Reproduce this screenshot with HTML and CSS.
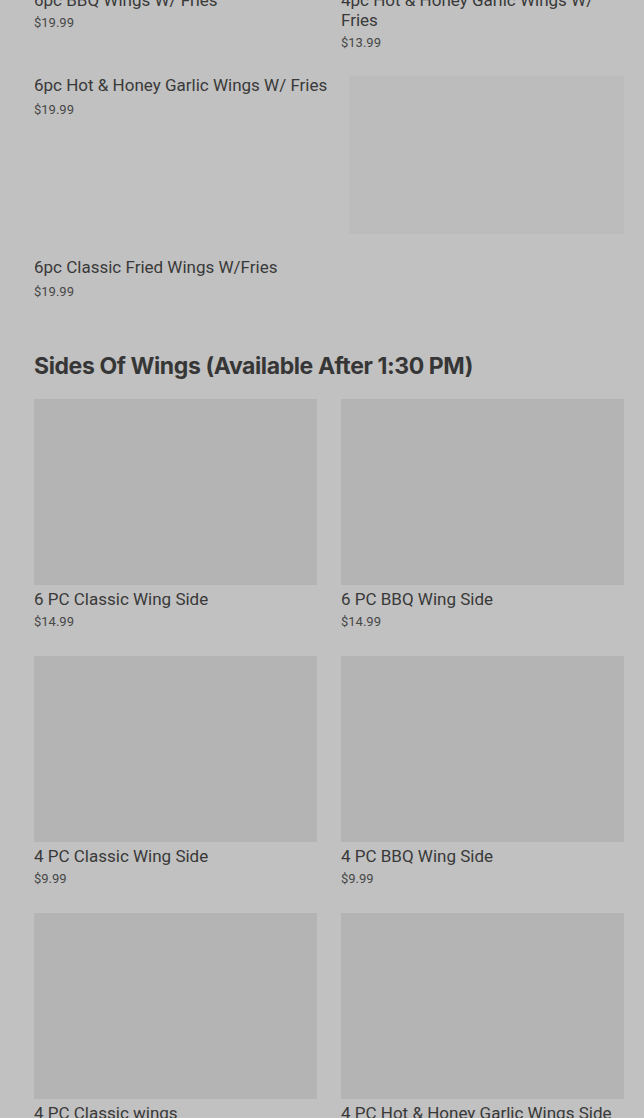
FILE: index.html
```html
<!DOCTYPE html>
<html lang="en">
<head>
  <meta charset="UTF-8" />
  <title>Menu</title>
  <meta name="viewport" content="width=device-width, initial-scale=1.0" />
  <link rel="stylesheet" href="styles.css">
</head>
<body>

  <main class="menu">

    <section class="menu-section">
      <div class="item-grid">
        <div class="item">
          <div class="item-title">6pc BBQ Wings W/ Fries</div>
          <div class="item-price">$19.99</div>
        </div>
        <div class="item">
          <div class="item-title">4pc Hot &amp; Honey Garlic Wings W/ Fries</div>
          <div class="item-price">$13.99</div>
        </div>
      </div>

      <div class="item-row">
        <div class="item-info">
          <div class="item-title">6pc Hot &amp; Honey Garlic Wings W/ Fries</div>
          <div class="item-price">$19.99</div>
        </div>
        <div class="item-thumb"></div>
      </div>

      <div class="item-row">
        <div class="item-info">
          <div class="item-title">6pc Classic Fried Wings W/Fries</div>
          <div class="item-price">$19.99</div>
        </div>
      </div>
    </section>

    <section class="menu-section">
      <h2 class="section-title">Sides Of Wings (Available After 1:30 PM)</h2>
      <div class="item-grid">
        <div class="item">
          <div class="item-image"></div>
          <div class="item-title">6 PC Classic Wing Side</div>
          <div class="item-price">$14.99</div>
        </div>
        <div class="item">
          <div class="item-image"></div>
          <div class="item-title">6 PC BBQ Wing Side</div>
          <div class="item-price">$14.99</div>
        </div>
        <div class="item">
          <div class="item-image"></div>
          <div class="item-title">4 PC Classic Wing Side</div>
          <div class="item-price">$9.99</div>
        </div>
        <div class="item">
          <div class="item-image"></div>
          <div class="item-title">4 PC BBQ Wing Side</div>
          <div class="item-price">$9.99</div>
        </div>
        <div class="item">
          <div class="item-image"></div>
          <div class="item-title">4 PC Classic wings</div>
          <div class="item-price">$9.99</div>
        </div>
        <div class="item">
          <div class="item-image"></div>
          <div class="item-title">4 PC Hot &amp; Honey Garlic Wings Side</div>
          <div class="item-price">$9.99</div>
        </div>
      </div>
    </section>

  </main>

</body>
</html>
```

FILE: styles.css
```css
:root {
  --page-bg: #c1c1c1;
  --image-bg: #b4b4b4;
  --thumb-bg: #bcbcbc;
  --title-color: #393939;
  --price-color: #474747;
  --font: Roboto, 'Liberation Sans', Arial, sans-serif;
}

* {
  margin: 0;
  padding: 0;
  box-sizing: border-box;
}

html, body {
  background-color: var(--page-bg);
  font-family: var(--font);
  color: var(--title-color);
  overflow: hidden;
}

.menu {
  margin-top: -10px;
  padding: 0 20px 0 34px;
}

.menu-section {
  display: flex;
  flex-direction: column;
}

.section-title {
  margin: 51px 0 19px;
  font-family: Inter, 'Noto Sans', sans-serif;
  font-size: 23px;
  line-height: 28px;
  font-weight: 700;
  letter-spacing: -0.4px;
  color: #363636;
}

.item-grid {
  display: grid;
  grid-template-columns: 1fr 1fr;
  column-gap: 24px;
  row-gap: 25px;
}

.item-image {
  height: 186px;
  margin-bottom: 4px;
  background-color: var(--image-bg);
}

.item-title {
  font-size: 17px;
  line-height: 20px;
  font-weight: 400;
}

.item-price {
  margin-top: 4px;
  font-size: 13px;
  line-height: 18px;
  color: var(--price-color);
}

.item-row {
  display: flex;
  gap: 20px;
  margin-top: 23px;
}

.item-row + .item-row {
  margin-top: 23px;
}

.item-row .item-info {
  flex: 1;
}

.item-row .item-price {
  margin-top: 6px;
}

.item-thumb {
  width: 275px;
  height: 158px;
  margin-top: 1px;
  background-color: var(--thumb-bg);
}
```
